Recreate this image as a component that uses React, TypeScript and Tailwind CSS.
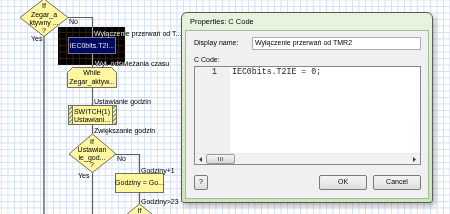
const FILL = "#fff7a0";
const EDGE = "#707062";
const WIRE = "#5e5e5e";

function Flowchart() {
  return (
    <svg className="absolute inset-0" width="450" height="214" viewBox="0 0 450 214">
      <defs>
        <pattern id="hatch" width="3" height="3" patternUnits="userSpaceOnUse" patternTransform="rotate(45)">
          <rect width="3" height="3" fill={FILL} />
          <line x1="0.5" y1="0" x2="0.5" y2="3" stroke="#7d7640" strokeWidth="1.1" />
        </pattern>
      </defs>

      {/* connectors */}
      <line x1="44" y1="36" x2="44" y2="214" stroke="#8f8f8f" strokeWidth="2" />
      <g fill="none" stroke={WIRE} strokeWidth="1.2">
        <polyline points="68,17.5 92.5,17.5 92.5,67" />
        <line x1="92.5" y1="87" x2="92.5" y2="105" />
        <line x1="92.5" y1="124" x2="92.5" y2="134" />
        <line x1="92.5" y1="172" x2="92.5" y2="214" />
        <polyline points="116,154.5 139.5,154.5 139.5,173" />
        <line x1="139.5" y1="192" x2="139.5" y2="204" />
      </g>

      {/* shapes */}
      <g stroke={EDGE} strokeWidth="1">
        <polygon points="44,-1 68,17.5 44,36.5 20,17.5" fill={FILL} />
        <rect x="68.5" y="37.5" width="47" height="16" fill={FILL} stroke="#8a8a70" />
        <polygon points="72.5,67.5 111.5,67.5 116.5,72.5 116.5,87.5 67.5,87.5 67.5,72.5" fill={FILL} />
        <rect x="68.5" y="105.5" width="48" height="19" fill={FILL} />
        <rect x="68.5" y="105.5" width="4" height="19" fill="url(#hatch)" />
        <rect x="112.5" y="105.5" width="4" height="19" fill="url(#hatch)" />
        <polygon points="92.5,134 116,154 92.5,172.5 69,154" fill={FILL} />
        <rect x="115.5" y="173.5" width="48" height="19" fill={FILL} />
        <polygon points="139.5,204 163,223 139.5,242 116,223" fill={FILL} />
      </g>

      {/* text */}
      <g fill="#000" fontSize="7">
        <g textAnchor="middle">
          <text x="44" y="7.5">If</text>
          <text x="44" y="17">Zegar_a</text>
          <text x="44" y="25">ktywny ...</text>
          <text x="44" y="32.5">?</text>
          <text x="92" y="48">IEC0bits.T2I...</text>
          <text x="92" y="75">While</text>
          <text x="92" y="84">Zegar_aktyw...</text>
          <text x="92" y="113.5">SWITCH(1)</text>
          <text x="92" y="122">Ustawiani...</text>
          <text x="92" y="144">If</text>
          <text x="92" y="151.5">Ustawian</text>
          <text x="92" y="159.5">ie_god...</text>
          <text x="92" y="166.5">?</text>
          <text x="139.5" y="185">Godziny = Go...</text>
          <text x="139.5" y="212.5">If</text>
        </g>
        <text x="69" y="24">No</text>
        <text x="31" y="41">Yes</text>
        <text x="94" y="35.5">Wyłączenie przerwań od T...</text>
        <text x="95" y="65.5">Wył. odświeżania czasu</text>
        <text x="94" y="103.5">Ustawianie godzin</text>
        <text x="94" y="133">Zwiększanie godzin</text>
        <text x="117" y="161">No</text>
        <text x="78" y="177.5">Yes</text>
        <text x="141" y="172.5">Godziny+1</text>
        <text x="141" y="203.5">Godziny&gt;23</text>
      </g>
    </svg>
  );
}

function Arrow({ dir }: { dir: "left" | "right" }) {
  return (
    <svg width="3" height="5" viewBox="0 0 3 5">
      <polygon points={dir === "left" ? "3,0 0,2.5 3,5" : "0,0 3,2.5 0,5"} fill="#3c3c3c" />
    </svg>
  );
}

function Button({ label, className }: { label: string; className: string }) {
  return (
    <div
      className={`flex h-[15px] items-center justify-center rounded-[2px] border border-[#7a7a7a] bg-gradient-to-b from-[#f4f4f4] via-[#ebebeb] to-[#dddddd] ${className}`}
    >
      {label}
    </div>
  );
}

function Dialog() {
  return (
    <div className="absolute left-[181px] top-[12px] flex h-[191px] w-[252px] flex-col rounded-t-[6px] rounded-b-[3px] border border-[#555b55] bg-gradient-to-b from-[#e7f3df] via-[#d7ebcb] to-[#cde5bd] px-[3px] pb-[3px] shadow-[2px_3px_5px_rgba(0,0,0,0.3)]">
      <div className="flex h-[17px] items-center pl-[5px] text-[7.5px]">Properties: C Code</div>

      <div className="flex flex-1 flex-col border border-[#a6bc97] bg-[#f0f0f0] pl-[8px] pr-[7px] pt-[6px]">
        <div className="flex items-center">
          <span className="w-[58px]">Display name:</span>
          <div className="flex h-[13px] flex-1 items-center border border-[#abadb3] bg-white pl-[2px]">
            Wyłączenie przerwań od TMR2
          </div>
        </div>

        <div className="mt-[5px] leading-[9px]">C Code:</div>

        <div className="mt-[2px] flex h-[99px] flex-col border border-[#828790] bg-white font-['Liberation_Mono',monospace] text-[8.25px] leading-[10px] text-[#1e1e1e]">
          <div className="flex flex-1">
            <div className="w-[35px] bg-[#f0f0f0] pr-[13px] text-right">1</div>
            <div className="pl-[2px]">IEC0bits.T2IE = 0;</div>
          </div>
          {/* horizontal scrollbar */}
          <div className="flex h-[11px] items-center border-t border-[#e8e8e8] bg-[#f1f1f1]">
            <div className="flex w-[11px] justify-center">
              <Arrow dir="left" />
            </div>
            <div className="flex h-[10px] w-[29px] items-center justify-center gap-[1px] rounded-[2px] border border-[#9b9b9b] bg-gradient-to-b from-[#f6f6f6] to-[#d6d6d6]">
              <span className="h-[4px] w-px bg-[#777]" />
              <span className="h-[4px] w-px bg-[#777]" />
              <span className="h-[4px] w-px bg-[#777]" />
            </div>
            <div className="flex-1" />
            <div className="flex w-[11px] justify-center">
              <Arrow dir="right" />
            </div>
          </div>
        </div>

        <div className="mt-[10px] flex">
          <Button label="?" className="w-[14px]" />
          <Button label="OK" className="ml-auto w-[48px]" />
          <Button label="Cancel" className="ml-[6px] w-[48px]" />
        </div>
      </div>
    </div>
  );
}

export default function App() {
  return (
    <div className="relative isolate h-[214px] w-[450px] overflow-hidden bg-white bg-[linear-gradient(to_right,#d2e0f6_1px,transparent_1px),linear-gradient(to_bottom,#d2e0f6_1px,transparent_1px)] bg-[size:6.5px_6.5px] bg-[position:1px_-0.5px] font-['Liberation_Sans',Arial,sans-serif] text-[7px] text-black">
      <Flowchart />
      {/* the selected block is drawn inverted */}
      <div className="absolute left-[58px] top-[27px] h-[38px] w-[67px] bg-white mix-blend-difference" />
      <Dialog />
    </div>
  );
}
